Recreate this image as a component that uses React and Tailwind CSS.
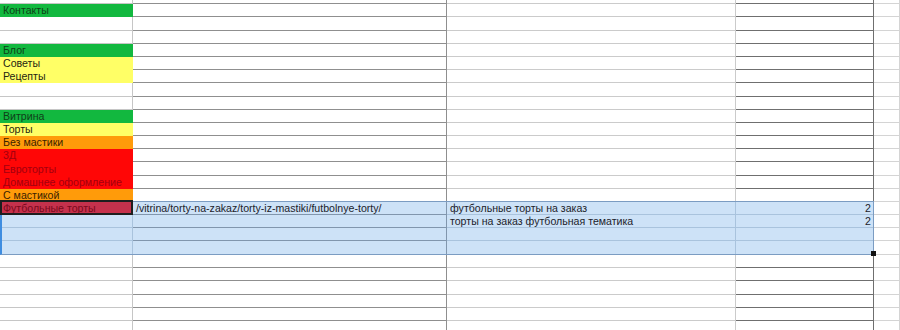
import clsx from "clsx";

const FILLS = {
  green: "bg-[#12b83f] text-[#0f3f18] border-[#12b83f]",
  yellow: "bg-[#ffff66] text-[#262610] border-[#ffff66]",
  orange: "bg-[#ff9b0a] text-[#3a2300] border-[#ff9b0a]",
  red: "bg-[#ff0606] text-[#a3000f] border-[#ff0606]",
  active: "bg-[#c5314c] text-[#7a0a1c] border-[#c5314c]",
};

// per column: width + gridline colour (normal / inside selection)
const COLS = [
  { w: "w-[133px]", line: "border-[#c6c6c6]", sel: "border-[#a9c3dd]" },
  { w: "w-[314px]", line: "border-[#8f8f8f]", sel: "border-[#8196ad]" },
  { w: "w-[289px]", line: "border-[#cbcbcb]", sel: "border-[#a9c3dd]" },
  { w: "w-[138px]", line: "border-[#6f6f6f]", sel: "border-[#a9c3dd]" },
  { w: "flex-1", line: "border-[#d4d4d4]", sel: "border-[#d4d4d4]" },
];

const rows = [
  { h: "h-[4px]" },
  { h: "h-[13px]", a: ["Контакты", "green"] },
  { h: "h-[14px]" },
  { h: "h-[13px]" },
  { h: "h-[13px]", a: ["Блог", "green"] },
  { h: "h-[13px]", a: ["Советы", "yellow"] },
  { h: "h-[13px]", a: ["Рецепты", "yellow"] },
  { h: "h-[14px]" },
  { h: "h-[13px]" },
  { h: "h-[13px]", a: ["Витрина", "green"] },
  { h: "h-[13px]", a: ["Торты", "yellow"] },
  { h: "h-[13px]", a: ["Без мастики", "orange"] },
  { h: "h-[13px]", a: ["3Д", "red"] },
  { h: "h-[14px]", a: ["Евроторты", "red"] },
  { h: "h-[13px]", a: ["Домашнее оформление", "red"] },
  { h: "h-[13px]", a: ["С мастикой", "orange"] },
  {
    h: "h-[13px]",
    sel: true,
    a: ["Футбольные торты", "active"],
    b: "/vitrina/torty-na-zakaz/torty-iz-mastiki/futbolnye-torty/",
    c: "футбольные торты на заказ",
    d: "2",
  },
  { h: "h-[13px]", sel: true, c: "торты на заказ футбольная тематика", d: "2" },
  { h: "h-[13px]", sel: true },
  { h: "h-[14px]", sel: true },
  { h: "h-[13px]" },
  { h: "h-[13px]" },
  { h: "h-[14px]" },
  { h: "h-[13px]" },
  { h: "h-[13px]" },
  { h: "h-[14px]" },
];

function Cell({ col, text, fill, sel, right }) {
  const c = COLS[col];
  return (
    <div
      className={clsx(
        "flex items-end shrink-0 overflow-hidden whitespace-nowrap border-r border-b leading-[12px] pl-[3px] pr-[2px]",
        c.w,
        right && "justify-end",
        fill
          ? FILLS[fill]
          : sel && col < 4
          ? clsx("bg-[#cde2f7] text-[#1c232b]", c.sel)
          : clsx("bg-white text-[#1d1d1d]", c.line)
      )}
    >
      {text}
    </div>
  );
}

export default function App() {
  return (
    <div className="relative w-[900px] h-[330px] overflow-hidden bg-white text-[10.6px] font-['Liberation_Sans',Arial,sans-serif]">
      {rows.map((r, i) => (
        <div key={i} className={clsx("flex", r.h)}>
          <Cell col={0} text={r.a?.[0]} fill={r.a?.[1]} sel={r.sel} />
          <Cell col={1} text={r.b} sel={r.sel} />
          <Cell col={2} text={r.c} sel={r.sel} />
          <Cell col={3} text={r.d} sel={r.sel} right />
          <Cell col={4} />
        </div>
      ))}

      {/* selection range A16:D19 */}
      <div className="absolute left-0 top-[201px] w-[874px] h-[54px] border border-[#7b9cc2] border-l-2 border-l-[#3f8de0] pointer-events-none" />
      {/* active cell */}
      <div className="absolute left-0 top-[200px] w-[133px] h-[15px] border-2 border-[#1e1e1e] pointer-events-none" />
      {/* fill handle */}
      <div className="absolute left-[871px] top-[251px] w-[5px] h-[5px] bg-[#111]" />
    </div>
  );
}
